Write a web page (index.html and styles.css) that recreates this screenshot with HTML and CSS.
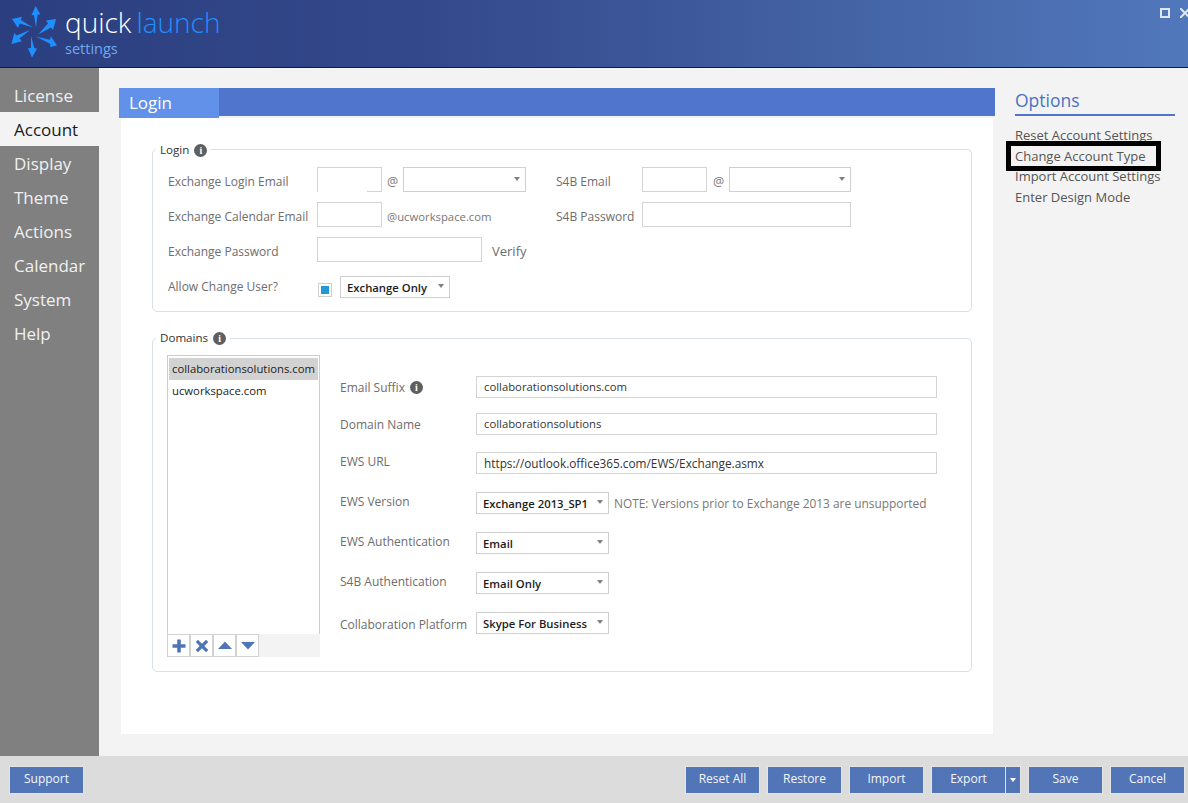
FILE: index.html
```html
<!DOCTYPE html>
<html lang="en">
<head>
<meta charset="utf-8">
<title>quicklaunch settings</title>
<link rel="stylesheet" href="styles.css">
</head>
<body>
<div class="app">
  <header class="header">
    <svg class="logo" viewBox="0 0 60 64" width="60" height="64">
      <g fill="#1e8fff">
        <path d="M30.700 6 35.300 14.500 32.600 14.500 31 27.500 29 15 26.500 15.200Z"/>
        <path d="M51 19 48 30 46 27.500 33 34.500 43 23.500 41 20.500Z"/>
        <path d="M52 45.500 44.800 47 45.500 44 31 36.500 45 39.800 45.800 36.300Z"/>
        <path d="M27 57.500 23 48.300 26 48 26 36 29.300 48 32 48.800Z"/>
        <path d="M6.500 44 9.300 33 11.500 35.500 25 30 14.500 38.500 16.800 41.200Z"/>
        <path d="M7 19 17 16.800 15.800 20 28 27.500 14.800 23.500 13 28Z"/>
      </g>
    </svg>
    <div class="brand">
      <div class="brand-name"><span class="quick">quick</span><span class="launch">launch</span></div>
      <div class="brand-sub">settings</div>
    </div>
    <div class="win-controls">
      <span class="win-max"></span>
      <svg class="win-close" viewBox="0 0 10 10" width="10" height="10"><path d="M0 0 L10 10 M10 0 L0 10" stroke="#dfe6f3" stroke-width="2"/></svg>
    </div>
  </header>

  <div class="body">
    <nav class="nav">
      <a class="nav-item">License</a>
      <a class="nav-item active">Account</a>
      <a class="nav-item">Display</a>
      <a class="nav-item">Theme</a>
      <a class="nav-item">Actions</a>
      <a class="nav-item">Calendar</a>
      <a class="nav-item">System</a>
      <a class="nav-item">Help</a>
    </nav>

    <main class="main">
      <div class="title-bar"><div class="title-tab">Login</div></div>
      <div class="panel">
        <fieldset class="group group-login">
          <legend>Login <span class="info">i</span></legend>
          <div class="login-grid">
            <div class="col-left">
              <div class="row">
                <label class="lbl lbl-w">Exchange Login Email</label>
                <span class="input w65 notch"></span>
                <span class="at-sign">@</span>
                <span class="select blank w123"><i class="caret"></i></span>
              </div>
              <div class="row">
                <label class="lbl lbl-w">Exchange Calendar Email</label>
                <span class="input w65"></span>
                <span class="at">@ucworkspace.com</span>
              </div>
              <div class="row">
                <label class="lbl lbl-w">Exchange Password</label>
                <span class="input w165"></span>
                <span class="verify">Verify</span>
              </div>
              <div class="row row-last">
                <label class="lbl lbl-w lbl-last">Allow Change User?</label>
                <span class="check"><i></i></span>
                <span class="select w110">Exchange Only<i class="caret"></i></span>
              </div>
            </div>
            <div class="col-right">
              <div class="row">
                <label class="lbl lbl-s">S4B Email</label>
                <span class="input w65"></span>
                <span class="at-sign wide-at">@</span>
                <span class="select blank w122"><i class="caret"></i></span>
              </div>
              <div class="row">
                <label class="lbl lbl-s">S4B Password</label>
                <span class="input w209"></span>
              </div>
            </div>
          </div>
        </fieldset>

        <fieldset class="group group-domains">
          <legend>Domains <span class="info">i</span></legend>
          <div class="domains">
            <div class="list-wrap">
              <ul class="list">
                <li class="selected">collaborationsolutions.com</li>
                <li>ucworkspace.com</li>
              </ul>
              <div class="toolbar">
                <button class="tool" aria-label="Add"><svg viewBox="0 0 16 16" width="16" height="16"><path d="M6.2 1.5h3.6v4.7h4.7v3.6H9.800v4.700H6.200V9.800H1.500V6.200h4.700z" fill="#4f75b8"/></svg></button>
                <button class="tool" aria-label="Remove"><svg viewBox="0 0 16 16" width="16" height="16"><path d="M4 1.800 8 5.700 12 1.800 14.300 4.100 10.400 8 14.300 11.900 12 14.200 8 10.300 4 14.200 1.700 11.900 5.600 8 1.700 4.100z" fill="#4f75b8"/></svg></button>
                <button class="tool" aria-label="Up"><svg viewBox="0 0 16 16" width="16" height="16"><path d="M8 3.500 15 11H1z" fill="#4f75b8"/></svg></button>
                <button class="tool" aria-label="Down"><svg viewBox="0 0 16 16" width="16" height="16"><path d="M1 4h14L8 11.500z" fill="#4f75b8"/></svg></button>
              </div>
            </div>
            <div class="domain-form">
              <label class="lbl">Email Suffix <span class="info">i</span></label>
              <span class="input wide dark">collaborationsolutions.com</span>
              <label class="lbl">Domain Name</label>
              <span class="input wide dark">collaborationsolutions</span>
              <label class="lbl lbl-high">EWS URL</label>
              <span class="input wide dark url">https://outlook.office365.com/EWS/Exchange.asmx</span>
              <label class="lbl lbl-high">EWS Version</label>
              <div class="with-note"><span class="select w133">Exchange 2013_SP1<i class="caret"></i></span><span class="note">NOTE: Versions prior to Exchange 2013 are unsupported</span></div>
              <label class="lbl lbl-high">EWS Authentication</label>
              <span class="select w133">Email<i class="caret"></i></span>
              <label class="lbl lbl-high">S4B Authentication</label>
              <span class="select w133">Email Only<i class="caret"></i></span>
              <label class="lbl lbl-low">Collaboration Platform</label>
              <span class="select w133">Skype For Business<i class="caret"></i></span>
            </div>
          </div>
        </fieldset>
      </div>
    </main>

    <aside class="options">
      <h2 class="options-title">Options</h2>
      <ul class="options-list">
        <li>Reset Account Settings</li>
        <li>Change Account Type</li>
        <li>Import Account Settings</li>
        <li>Enter Design Mode</li>
      </ul>
      <div class="highlight"></div>
    </aside>
  </div>

  <footer class="footer">
    <button class="btn">Support</button>
    <div class="footer-right">
      <button class="btn">Reset All</button>
      <button class="btn">Restore</button>
      <button class="btn">Import</button>
      <div class="split">
        <button class="btn">Export</button>
        <button class="btn btn-drop" aria-label="More"><i></i></button>
      </div>
      <button class="btn">Save</button>
      <button class="btn">Cancel</button>
    </div>
  </footer>
</div>
</body>
</html>
```
FILE: styles.css
```css
* { box-sizing: border-box; }
html, body { margin: 0; height: 100%; }
body { font-family: "Open Sans", "Noto Sans", sans-serif; font-size: 12px; color: #6d6d6d; overflow: hidden; }
.app { width: 1188px; height: 803px; display: flex; flex-direction: column; background: #f3f3f3; }

.header { height: 68px; flex: none; display: flex; align-items: flex-start; position: relative; border-bottom: 1px solid #0d1a50; background: linear-gradient(90deg, #2b3f80 0%, #33488a 35%, #4566a8 75%, #5178bb 100%); }
.logo { margin: 0 0 0 5px; flex: none; }
.brand { margin: 3px 0 0 0; }
.brand-name { font-size: 28px; line-height: 38px; font-weight: 300; display: flex; gap: 5px; font-family: "Open Sans", sans-serif; }
.quick { color: #fff; }
.launch { color: #1e8fff; }
.brand-sub { font-size: 14.500px; line-height: 16px; color: #6fa8f2; margin-top: 0; }
.win-controls { position: absolute; top: 8px; left: 1160px; display: flex; gap: 10px; align-items: center; }
.win-max { width: 10px; height: 10px; border: 2px solid #dfe6f3; }

.body { flex: 1; display: flex; min-height: 0; }
.nav { width: 99px; flex: none; background: #808080; padding-top: 10px; display: flex; flex-direction: column; }
.nav-item { height: 34px; line-height: 32px; padding: 2px 0 0 14px; font-size: 17px; color: #f0f0f0; }
.nav-item.active { background: #f3f3f3; color: #1a1a1a; }

.main { width: 876px; margin: 20px 0 0 20px; flex: none; }
.title-bar { height: 30px; background: linear-gradient(#5075cc 28px, #f3f3f3 28px); }
.title-tab { width: 100px; height: 30px; background: #6191e9; color: #fff; font-size: 17px; line-height: 30px; padding-left: 10px; }
.panel { margin: 0 2px; height: 616px; background: #fff; padding: 23px 21px 0 31px; }

.group { margin: 0; padding: 0; border: 1px solid #d6e0e6; border-radius: 5px; min-width: 0; }
.group legend { margin-left: -12px; padding: 1px 4px 0; font-size: 11.600px; line-height: 16px; color: #333; display: flex; align-items: center; gap: 5px; }
.group-domains legend { padding-top: 0; margin-left: -11px; }
.group-login { height: 171px; padding: 9px 15px 0; }
.group-domains { height: 342px; margin-top: 18px; padding: 9px 15px 0 14px; }
.info { display: inline-block; width: 13px; height: 13px; border-radius: 50%; background: #5f5f5f; color: #fff; font: bold 10px/13px "Liberation Serif", serif; text-align: center; }

.login-grid { display: flex; }
.col-left { width: 388px; flex: none; display: flex; flex-direction: column; gap: 10px; }
.col-right { display: flex; flex-direction: column; gap: 10px; }
.row { display: flex; align-items: center; height: 25px; }
.row-last { margin-top: 2px; }
.lbl { color: #6d6d6d; display: flex; align-items: center; gap: 5px; }
.lbl-w, .lbl-s { padding-top: 4px; }
.lbl-w { width: 149px; flex: none; }
.lbl-s { width: 86px; flex: none; }
.lbl-last { padding-top: 0; margin-top: 0; }
.input { display: block; height: 25px; background: #fff; border: 1px solid #d4d4d4; color: #333; }
.input.notch { border-bottom: 0; background: linear-gradient(#d4d4d4, #d4d4d4) right bottom / 14px 1px no-repeat #fff; }
.w65 { width: 65px; }
.w165 { width: 165px; }
.w209 { width: 209px; }
.at { margin-left: 5px; padding-top: 4px; font-size: 11.300px; color: #777; }
.at-sign { width: 21px; padding: 4px 0 0 5px; font-size: 12.500px; color: #777; flex: none; }
.at-sign.wide-at { width: 22px; padding-left: 6px; }
.verify { margin-left: 10px; padding-top: 2px; font-size: 13px; }
.select { display: flex; align-items: center; position: relative; height: 22px; padding: 2px 0 0 6px; background: #fff; border: 1px solid #cfcfcf; color: #1c1c1c; font-weight: 600; font-size: 11.300px; white-space: nowrap; flex: none; }
.select.blank { height: 25px; }
.w123 { width: 123px; }
.w122 { width: 122px; }
.w110 { width: 110px; }
.w133 { width: 133px; }
.caret { position: absolute; right: 5px; top: 50%; margin-top: -3px; width: 0; height: 0; border: 3.500px solid transparent; border-top: 4px solid #808080; border-bottom: 0; }
.check { width: 14px; height: 14px; margin: 6px 8px 0 1px; border: 1px solid #cfcfcf; background: #fff; padding: 2px; flex: none; }
.check i { display: block; width: 8px; height: 8px; background: #1f9ad6; }

.domains { display: flex; gap: 20px; }
.list-wrap { width: 153px; flex: none; height: 302px; display: flex; flex-direction: column; }
.list { margin: 0; padding: 2px 1px; list-style: none; height: 279px; border: 1px solid #cdcdcd; border-bottom: 0; background: #fff; }
.list li { height: 22px; line-height: 22px; padding-left: 3px; font-size: 11.300px; color: #1c1c1c; white-space: nowrap; }
.list li.selected { background: #d2d2d2; }
.toolbar { display: flex; height: 23px; background: #f3f3f3; }
.tool { width: 23px; height: 23px; padding: 0; border: 1px solid #d2d2d2; background: #fff; display: flex; align-items: center; justify-content: center; }

.domain-form { flex: 1; display: grid; grid-template-columns: 136px 461px; grid-template-rows: 37px 39px 40px 40px 40px 40px 22px; align-items: start; margin-top: 21px; }
.domain-form .lbl { height: 22px; }
.domain-form .select { width: 133px; padding-top: 0; }
.lbl-high { margin-top: -2px; }
.lbl-low { margin-top: 1px; }
.input.wide { width: 461px; height: 22px; line-height: 20px; padding-left: 7px; font-size: 11.300px; }
.input.url { font-size: 11.800px; }
.with-note { display: flex; align-items: center; gap: 5px; }
.note { font-size: 11.900px; color: #777; white-space: nowrap; }

.options { flex: 1; position: relative; padding: 20px 13px 0 20px; }
.options-title { margin: 0; height: 28px; font-size: 17.500px; line-height: 25px; font-weight: 400; color: #4a72c4; border-bottom: 2px solid #4f75c4; }
.options-list { margin: 9px 0 0; padding: 0; list-style: none; }
.options-list li { height: 20.700px; line-height: 21px; font-size: 13px; color: #555; white-space: nowrap; }
.highlight { position: absolute; left: 11px; top: 73px; width: 155px; height: 30px; border: 5px solid #000; }

.footer { height: 47px; flex: none; background: #dcdcdc; display: flex; justify-content: space-between; align-items: flex-start; padding: 11px 4px 0 10px; }
.footer-right { display: flex; gap: 9px; }
.split { display: flex; gap: 1px; }
.btn { width: 73px; height: 26px; padding: 0 0 3px; border: 0; background: #5275b8; color: #f4f6fa; font: 12px "Open Sans", sans-serif; box-shadow: 0 0 0 1px #e4e4e4; }
.btn-drop { width: 14px; padding: 0; display: flex; align-items: center; justify-content: center; }
.btn-drop i { width: 0; height: 0; border: 3.500px solid transparent; border-top: 4px solid #fff; border-bottom: 0; }
```
